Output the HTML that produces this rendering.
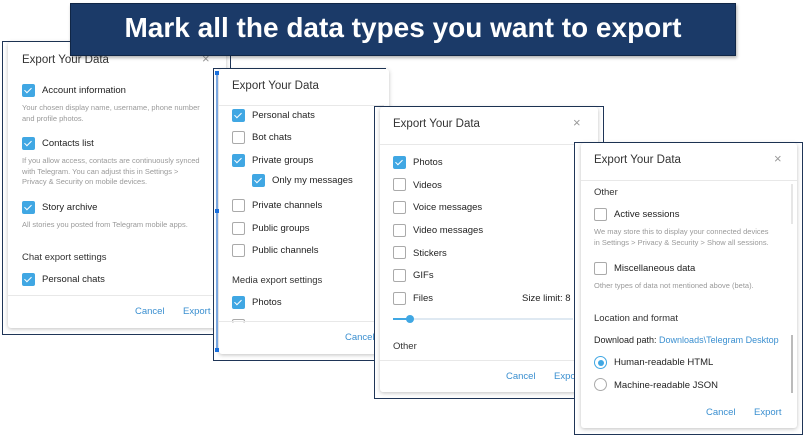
<!DOCTYPE html>
<html><head><meta charset="utf-8"><style>
*{margin:0;padding:0;box-sizing:border-box}
body{width:806px;height:439px;overflow:hidden;background:#fff;font-family:"Liberation Sans",sans-serif;position:relative;color:#222}
.p{position:absolute;border:1.5px solid #1f3557;background:#fff;overflow:hidden}
.card{position:absolute;background:#fff;box-shadow:0 1px 4px rgba(0,0,0,.25);border-radius:3px}
.a{position:absolute;white-space:nowrap}
.t{font-size:11.5px;color:#333}
.l{font-size:9.5px;color:#222}
.s{font-size:7.5px;color:#9a9a9a;line-height:10.5px}
.h{font-size:9.5px;color:#333}
.b{font-size:9.5px;color:#3a8fd0}
.x{font-size:13px;color:#999}
.cb{position:absolute;width:13px;height:13px;border-radius:2px}
.on{background:#40a7e3}
.on::after{content:"";position:absolute;left:4px;top:2px;width:3px;height:6px;border:solid #fff;border-width:0 1.5px 1.5px 0;transform:rotate(45deg)}
.off{border:1.3px solid #aaa;background:#fff}
.sep{position:absolute;height:1px;background:#e8e8e8}
.r{position:absolute;width:13px;height:13px;border-radius:50%;border:1.3px solid #aaa}
</style></head><body>

<!-- Panel 1 -->
<div class="p" style="left:2px;top:41px;width:229px;height:294px"></div>
<div class="card" style="left:8px;top:42px;width:218px;height:286px"></div>
<div class="a t" style="left:22px;top:54px">Export Your Data</div>
<div class="a x" style="left:202px;top:51px">×</div>
<div class="cb on" style="left:22px;top:84px"></div><div class="a l" style="left:42px;top:85px">Account information</div>
<div class="a s" style="left:22px;top:103px">Your chosen display name, username, phone number<br>and profile photos.</div>
<div class="cb on" style="left:22px;top:137px"></div><div class="a l" style="left:42px;top:138px">Contacts list</div>
<div class="a s" style="left:22px;top:156px">If you allow access, contacts are continuously synced<br>with Telegram. You can adjust this in Settings &gt;<br>Privacy &amp; Security on mobile devices.</div>
<div class="cb on" style="left:22px;top:201px"></div><div class="a l" style="left:42px;top:202px">Story archive</div>
<div class="a s" style="left:22px;top:220px">All stories you posted from Telegram mobile apps.</div>
<div class="a h" style="left:22px;top:252px">Chat export settings</div>
<div class="cb on" style="left:22px;top:273px"></div><div class="a l" style="left:42px;top:274px">Personal chats</div>
<div class="sep" style="left:8px;top:295px;width:205px"></div>
<div class="a b" style="left:135px;top:306px">Cancel</div><div class="a b" style="left:183px;top:306px">Export</div>

<!-- Panel 2 -->
<div class="p" style="left:213px;top:68px;width:173px;height:293px"></div>
<div class="card" style="left:219px;top:69px;width:170px;height:285px"></div>
<div class="a t" style="left:232px;top:80px">Export Your Data</div>
<div class="sep" style="left:219px;top:105px;width:165px"></div>
<div class="cb on" style="left:232px;top:109px"></div><div class="a l" style="left:252px;top:110px">Personal chats</div>
<div class="cb off" style="left:232px;top:131px"></div><div class="a l" style="left:252px;top:132px">Bot chats</div>
<div class="cb on" style="left:232px;top:154px"></div><div class="a l" style="left:252px;top:155px">Private groups</div>
<div class="cb on" style="left:252px;top:174px"></div><div class="a l" style="left:272px;top:175px">Only my messages</div>
<div class="cb off" style="left:232px;top:199px"></div><div class="a l" style="left:252px;top:200px">Private channels</div>
<div class="cb off" style="left:232px;top:222px"></div><div class="a l" style="left:252px;top:223px">Public groups</div>
<div class="cb off" style="left:232px;top:244px"></div><div class="a l" style="left:252px;top:245px">Public channels</div>
<div class="a h" style="left:232px;top:275px">Media export settings</div>
<div class="cb on" style="left:232px;top:296px"></div><div class="a l" style="left:252px;top:297px">Photos</div>
<div class="cb off" style="left:232px;top:319px;height:4px;border-bottom:none"></div>
<div class="sep" style="left:219px;top:321px;width:165px"></div>
<div class="a b" style="left:345px;top:332px">Cancel</div>
<div style="position:absolute;left:216px;top:71px;width:2px;height:280px;background:#7aa7e0"></div>
<div style="position:absolute;left:215px;top:71px;width:4px;height:4px;background:#1a6fdc"></div>
<div style="position:absolute;left:215px;top:209px;width:4px;height:4px;background:#1a6fdc"></div>
<div style="position:absolute;left:215px;top:348px;width:4px;height:4px;background:#1a6fdc"></div>

<!-- Panel 3 -->
<div class="p" style="left:374px;top:106px;width:230px;height:293px"></div>
<div class="card" style="left:380px;top:107px;width:218px;height:285px"></div>
<div class="a t" style="left:393px;top:118px">Export Your Data</div>
<div class="a x" style="left:573px;top:115px">×</div>
<div class="sep" style="left:380px;top:144px;width:218px"></div>
<div class="cb on" style="left:393px;top:156px"></div><div class="a l" style="left:413px;top:157px">Photos</div>
<div class="cb off" style="left:393px;top:178px"></div><div class="a l" style="left:413px;top:180px">Videos</div>
<div class="cb off" style="left:393px;top:201px"></div><div class="a l" style="left:413px;top:202px">Voice messages</div>
<div class="cb off" style="left:393px;top:224px"></div><div class="a l" style="left:413px;top:225px">Video messages</div>
<div class="cb off" style="left:393px;top:246px"></div><div class="a l" style="left:413px;top:248px">Stickers</div>
<div class="cb off" style="left:393px;top:269px"></div><div class="a l" style="left:413px;top:270px">GIFs</div>
<div class="cb off" style="left:393px;top:292px"></div><div class="a l" style="left:413px;top:293px">Files</div>
<div class="a l" style="left:522px;top:293px">Size limit: 8 MB</div>
<div style="position:absolute;left:393px;top:318px;width:180px;height:2px;background:#dfe9f2"></div>
<div style="position:absolute;left:393px;top:318px;width:18px;height:2px;background:#40a7e3"></div>
<div style="position:absolute;left:406px;top:315px;width:8px;height:8px;border-radius:50%;background:#40a7e3"></div>
<div class="a h" style="left:393px;top:341px">Other</div>
<div class="sep" style="left:380px;top:360px;width:218px"></div>
<div class="a b" style="left:506px;top:371px">Cancel</div><div class="a b" style="left:554px;top:371px">Export</div>

<!-- Panel 4 -->
<div class="p" style="left:574px;top:142px;width:229px;height:293px"></div>
<div class="card" style="left:581px;top:143px;width:216px;height:285px"></div>
<div class="a t" style="left:594px;top:154px">Export Your Data</div>
<div class="a x" style="left:774px;top:151px">×</div>
<div class="sep" style="left:581px;top:180px;width:216px"></div>
<div style="position:absolute;left:791px;top:184px;width:1.5px;height:40px;background:#e6e6e6"></div>
<div style="position:absolute;left:791px;top:335px;width:1.5px;height:58px;background:#bbb"></div>
<div class="a h" style="left:594px;top:187px">Other</div>
<div class="cb off" style="left:594px;top:208px"></div><div class="a l" style="left:614px;top:209px">Active sessions</div>
<div class="a s" style="left:594px;top:227px">We may store this to display your connected devices<br>in Settings &gt; Privacy &amp; Security &gt; Show all sessions.</div>
<div class="cb off" style="left:594px;top:262px"></div><div class="a l" style="left:614px;top:263px">Miscellaneous data</div>
<div class="a s" style="left:594px;top:281px">Other types of data not mentioned above (beta).</div>
<div class="a h" style="left:594px;top:313px">Location and format</div>
<div class="a l" style="left:594px;top:335px;font-size:9px">Download path: <span style="color:#3a8fd0">Downloads\Telegram Desktop</span></div>
<div class="r" style="left:594px;top:356px;border-color:#40a7e3"></div>
<div style="position:absolute;left:597.5px;top:359.5px;width:6px;height:6px;border-radius:50%;background:#40a7e3"></div>
<div class="a l" style="left:614px;top:357px">Human-readable HTML</div>
<div class="r" style="left:594px;top:378px"></div><div class="a l" style="left:614px;top:380px">Machine-readable JSON</div>
<div class="a b" style="left:706px;top:407px">Cancel</div><div class="a b" style="left:754px;top:407px">Export</div>

<!-- Banner -->
<div style="position:absolute;left:70px;top:3px;width:666px;height:53px;background:#1b3a68;border:1.5px solid #102646;box-shadow:1px 2px 3px rgba(0,0,0,.3)"></div>
<div class="a" style="left:70px;top:12px;width:666px;text-align:center;font-size:28px;font-weight:bold;color:#fff;font-family:'Liberation Sans',sans-serif">Mark all the data types you want to export</div>
</body></html>
